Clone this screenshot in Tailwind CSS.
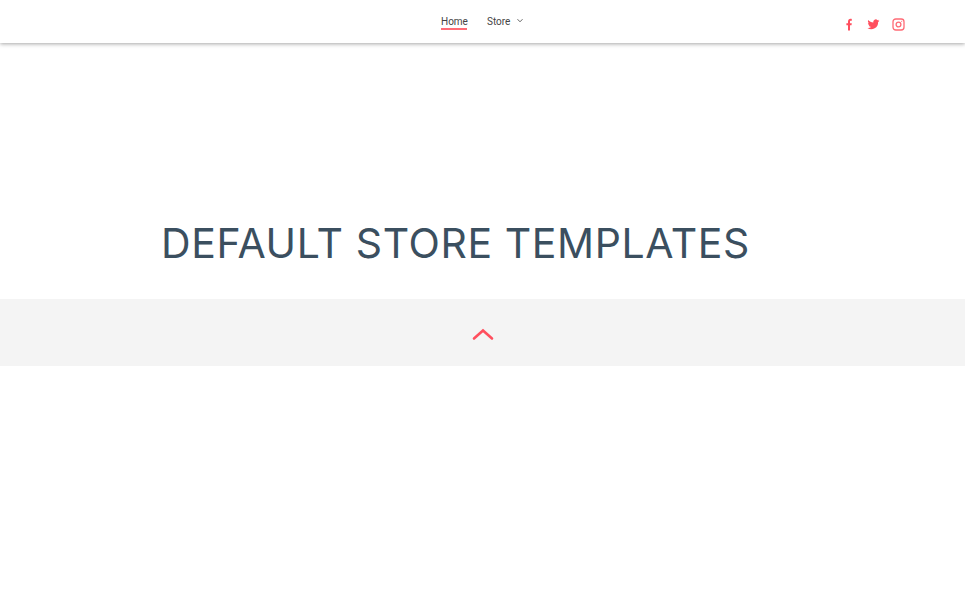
<!DOCTYPE html>
<html lang="en">
<head>
  <meta charset="UTF-8">
  <meta name="viewport" content="width=device-width, initial-scale=1">
  <title>Default Store Templates</title>
  <script src="https://cdn.jsdelivr.net/npm/@tailwindcss/browser@4"></script>
</head>
<body class="bg-white font-['Roboto',sans-serif] h-[603px] overflow-hidden">

  <!-- Navbar -->
  <nav class="h-[43px] bg-white shadow-[0_1px_4px_rgba(0,0,0,0.35)] relative flex">
    <div class="w-[441px]"></div>
    <a href="#" class="h-[24px] mt-[6px] w-[26px] border-b-2 border-[#ff6b76] text-[10px] leading-[31px] text-[#444] whitespace-nowrap">Home</a>
    <a href="#" class="ml-[20px] mt-[6px] h-[24px] w-[24px] text-[10px] leading-[31px] text-[#444] whitespace-nowrap">Store</a>
    <svg class="ml-[5px] mt-[18px] w-[8px] h-[6px]" viewBox="0 0 8 6" fill="none" stroke="#666" stroke-width="1"><path d="M1.500 1.200 4 3.800 6.500 1.200"/></svg>
    <div class="ml-[319px] mt-[17px] flex gap-[10px] items-center h-[14px]">
      <svg class="w-[13px] h-[13px]" viewBox="0 0 13 13" fill="#ff4f5e"><path d="M5 12.500V7.200H3.400V5.200H5V3.600C5 1.900 6 .8 7.500 .8c.6 0 1.100.1 1.300.1v1.900H7.900c-.7 0-.9.4-.9.9v1.500h1.800L8.500 7.200H7v5.300z"/></svg>
      <svg class="w-[13px] h-[13px] ml-[1px]" viewBox="0 0 24 24" fill="#ff4f5e"><path d="M23 4.900c-.8.4-1.700.6-2.600.8.900-.6 1.600-1.400 2-2.500-.9.5-1.900.9-2.900 1.100a4.500 4.500 0 0 0-7.800 4.100C7.900 8.200 4.500 6.400 2.300 3.600c-1.200 2.100-.6 4.700 1.400 6-.7 0-1.400-.2-2-.6 0 2.200 1.500 4.100 3.600 4.500-.7.2-1.400.2-2 .1.600 1.800 2.300 3.100 4.200 3.100A9.100 9.100 0 0 1 .8 18.600a12.800 12.800 0 0 0 19.700-11.400c.9-.6 1.700-1.400 2.500-2.300z"/></svg>
      <svg class="w-[13px] h-[13px] ml-[2px]" viewBox="0 0 13 13" fill="none" stroke="#ff6b76" stroke-width="1.300"><rect x="1" y="1" width="11" height="11" rx="2.800"/><circle cx="6.500" cy="6.500" r="2.400"/><circle cx="9.700" cy="3.300" r="0.500" fill="#ff4f5e" stroke="none"/></svg>
    </div>
  </nav>

  <!-- Title -->
  <section class="h-[256px] flex items-end pl-[161px] pb-[29px]">
    <h1 class="text-[41px] leading-[54px] font-['Inter',sans-serif] font-normal text-[#3b4f5f] tracking-[0.6px] whitespace-nowrap">DEFAULT STORE TEMPLATES</h1>
  </section>

  <!-- Grey band -->
  <section class="h-[67px] bg-[#f4f4f4] flex items-center justify-center">
    <svg class="w-[22px] h-[14px] mt-[2px]" viewBox="0 0 22 14" fill="none" stroke="#ff4f5e" stroke-width="2.600" stroke-linecap="round"><path d="M2 11.500 11 3.500 20 11.500"/></svg>
  </section>

</body>
</html>
